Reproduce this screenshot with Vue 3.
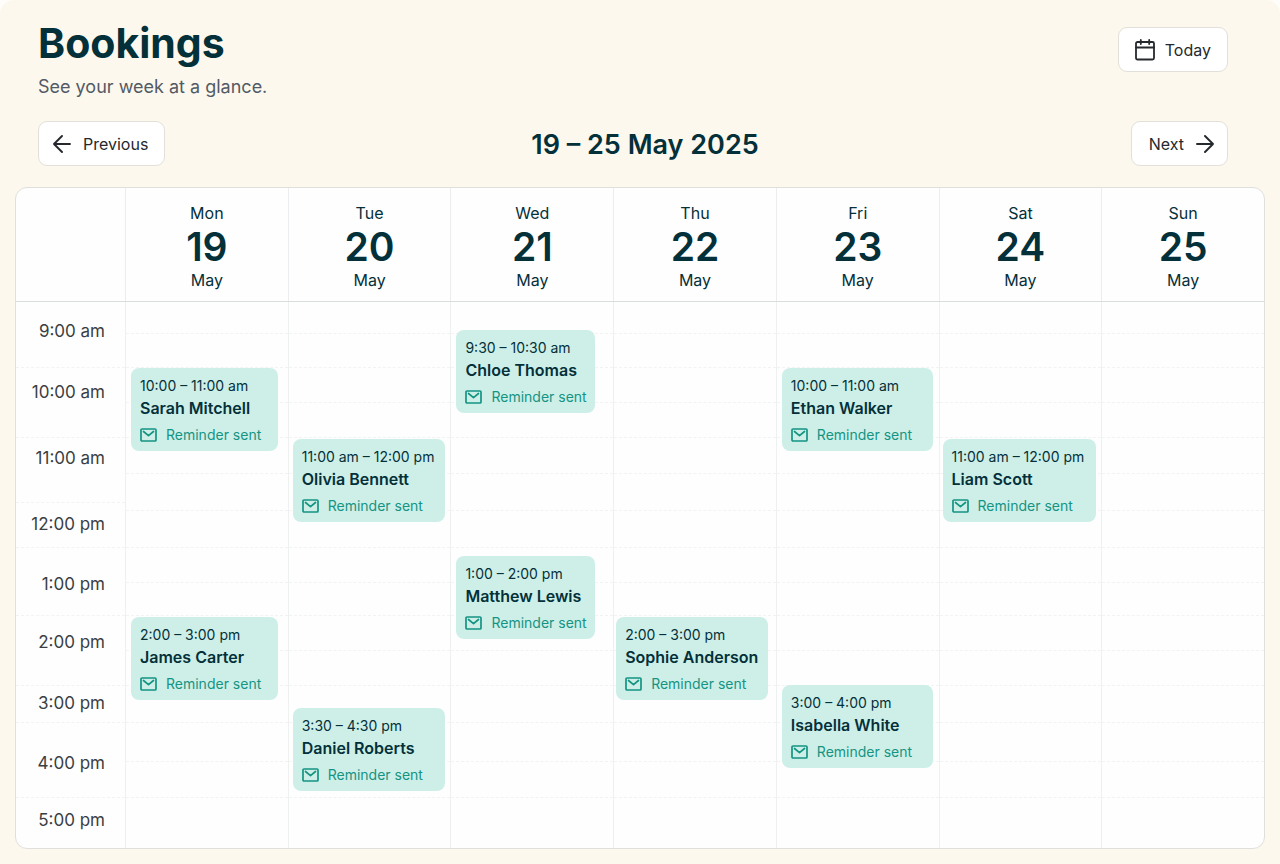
<template>
  <main class="page">
    <header class="page-header">
      <div class="title-row">
        <div>
          <h1 class="title">Bookings</h1>
          <p class="subtitle">See your week at a glance.</p>
        </div>
        <button type="button" class="btn btn-today">
          <svg class="icon-calendar" viewBox="0 0 20 22" aria-hidden="true">
            <rect x="1" y="3" width="18" height="17.5" rx="1.5" />
            <path d="M1 8.5h18M5.8 1v4M14.2 1v4" />
          </svg>
          Today
        </button>
      </div>

      <div class="week-nav">
        <button type="button" class="btn btn-previous">
          <svg class="icon-arrow" viewBox="0 0 18 18" aria-hidden="true">
            <path d="M17 9H1M9 1L1 9l8 8" />
          </svg>
          Previous
        </button>
        <h2 class="week-range">19 – 25 May 2025</h2>
        <button type="button" class="btn btn-next">
          Next
          <svg class="icon-arrow" viewBox="0 0 18 18" aria-hidden="true">
            <path d="M1 9h16M9 1l8 8-8 8" />
          </svg>
        </button>
      </div>
    </header>

    <section class="calendar" aria-label="Week calendar">
      <div class="calendar-row calendar-head">
        <div class="corner"></div>
        <div v-for="day in days" :key="day.date" class="day-head">
          <span class="day-text">{{ day.name }}</span>
          <span class="day-number">{{ day.date }}</span>
          <span class="day-text">May</span>
        </div>
      </div>

      <div class="calendar-row">
        <div class="time-column">
          <div class="time-lines">
            <div v-for="(h, i) in timeLines" :key="i" class="slot" :style="{ height: h + 'px' }"></div>
          </div>
          <div class="time-labels">
            <div v-for="t in times" :key="t.label" class="time-label" :style="{ height: t.height + 'px' }">
              {{ t.label }}
            </div>
          </div>
        </div>

        <div v-for="day in days" :key="day.date" class="day-column">
          <div v-for="(h, i) in slots" :key="i" class="slot" :style="{ height: h + 'px' }"></div>
          <!-- bookings lie over the slots -->
          <article
            v-for="b in day.bookings"
            :key="b.client"
            class="booking"
            :style="{ top: b.top + 'px', left: day.left + 'px', right: day.right + 'px' }"
          >
            <p class="booking-time">{{ b.time }}</p>
            <h3 class="booking-client">{{ b.client }}</h3>
            <p class="booking-reminder">
              <svg class="icon-mail" viewBox="0 0 17 14" aria-hidden="true">
                <rect x="1" y="1" width="15" height="12" rx="1" />
                <path d="M3.5 3.5l5 4.2 5-4.2" />
              </svg>
              Reminder sent
            </p>
          </article>
        </div>
      </div>
    </section>
  </main>
</template>

<script setup>
import { ref } from 'vue'

const times = [
  { label: '9:00 am', height: 58 },
  { label: '10:00 am', height: 64 },
  { label: '11:00 am', height: 68 },
  { label: '12:00 pm', height: 64 },
  { label: '1:00 pm', height: 56 },
  { label: '2:00 pm', height: 60 },
  { label: '3:00 pm', height: 62 },
  { label: '4:00 pm', height: 58 },
  { label: '5:00 pm', height: 56 }
]

// heights of the ruled slots
const slots = [32, 34, 35, 35, 36, 37, 37, 35, 33, 35, 35, 37, 39, 36]
const timeLines = [66, 70, 65, 45, 68, 70, 37, 75]

// left / right: gap between the booking and the column edges
const days = ref([
  {
    name: 'Mon', date: 19, left: 5, right: 10,
    bookings: [
      { time: '10:00 – 11:00 am', client: 'Sarah Mitchell', top: 66 },
      { time: '2:00 – 3:00 pm', client: 'James Carter', top: 315 }
    ]
  },
  {
    name: 'Tue', date: 20, left: 4, right: 5,
    bookings: [
      { time: '11:00 am – 12:00 pm', client: 'Olivia Bennett', top: 137 },
      { time: '3:30 – 4:30 pm', client: 'Daniel Roberts', top: 406 }
    ]
  },
  {
    name: 'Wed', date: 21, left: 5, right: 18,
    bookings: [
      { time: '9:30 – 10:30 am', client: 'Chloe Thomas', top: 28 },
      { time: '1:00 – 2:00 pm', client: 'Matthew Lewis', top: 254 }
    ]
  },
  {
    name: 'Thu', date: 22, left: 2, right: 8,
    bookings: [
      { time: '2:00 – 3:00 pm', client: 'Sophie Anderson', top: 315 }
    ]
  },
  {
    name: 'Fri', date: 23, left: 5, right: 6,
    bookings: [
      { time: '10:00 – 11:00 am', client: 'Ethan Walker', top: 66 },
      { time: '3:00 – 4:00 pm', client: 'Isabella White', top: 383 }
    ]
  },
  {
    name: 'Sat', date: 24, left: 3, right: 5,
    bookings: [
      { time: '11:00 am – 12:00 pm', client: 'Liam Scott', top: 137 }
    ]
  },
  { name: 'Sun', date: 25, left: 4, right: 6, bookings: [] }
])
</script>

<style>
body {
  background: #fefdfa;
}
</style>

<style scoped>
.page {
  box-sizing: border-box;
  min-height: 100vh;
  padding: 19px 15px 15px;
  border-radius: 14px 14px 0 0;
  background: #fdf8ed;
  color: #04303a;
  font-family: Inter, "Liberation Sans", sans-serif;
}

h1, h2, h3, p {
  margin: 0;
}

.page-header {
  padding: 0 37px 21px 23px;
}

.title-row {
  display: flex;
  justify-content: space-between;
  align-items: flex-start;
}

.title {
  font-size: 41px;
  line-height: 48px;
  font-weight: 700;
}

.subtitle {
  margin-top: 7px;
  font-size: 18px;
  line-height: 26px;
  color: #525a66;
}

.btn {
  display: flex;
  align-items: center;
  box-sizing: border-box;
  height: 45px;
  border: 1px solid #e2e0d9;
  border-radius: 9px;
  background: #fff;
  color: #25292d;
  font-family: inherit;
  font-size: 16px;
  line-height: 24px;
  cursor: pointer;
}

.btn-today {
  gap: 10px;
  margin-top: 8px;
  padding: 0 16px;
}

.btn-previous {
  gap: 12px;
  padding: 0 16px 0 14px;
}

.btn-next {
  gap: 12px;
  padding: 0 13px 0 17px;
}

.btn svg,
.icon-mail {
  flex: none;
  fill: none;
  stroke: currentColor;
  stroke-linecap: round;
  stroke-linejoin: round;
}

.icon-calendar {
  width: 20px;
  height: 22px;
  stroke-width: 1.8;
}

.icon-arrow {
  width: 18px;
  height: 18px;
  stroke-width: 1.9;
}

.week-nav {
  display: grid;
  grid-template-columns: 1fr auto 1fr;
  align-items: center;
  margin-top: 21px;
}

.btn-previous {
  justify-self: start;
}

.btn-next {
  justify-self: end;
}

.week-range {
  padding: 3px 0 0 24px;
  font-size: 27px;
  line-height: 36px;
  font-weight: 600;
}

.calendar {
  overflow: hidden;
  border: 1px solid #dfe0dc;
  border-radius: 12px;
  background: #fefefe;
}

.calendar-row {
  display: grid;
  grid-template-columns: 109px repeat(7, minmax(0, 1fr));
}

.calendar-head {
  border-bottom: 1px solid #dadddd;
}

.day-head {
  display: flex;
  flex-direction: column;
  align-items: center;
  padding: 13px 0 9px;
  border-left: 1px solid #ebedee;
}

.day-text {
  font-size: 16px;
  line-height: 24px;
}

.day-number {
  font-size: 39px;
  line-height: 43px;
  font-weight: 600;
}

.time-column {
  display: grid;
}

.time-lines,
.time-labels {
  grid-area: 1 / 1;
}

.time-label {
  display: flex;
  align-items: center;
  justify-content: flex-end;
  padding-right: 20px;
  font-size: 17px;
  color: #3a3e42;
}

.day-column {
  position: relative;
  border-left: 1px solid #eff1f1;
}

.slot {
  box-sizing: border-box;
  border-bottom: 1px dashed #f2f3f3;
}

.booking {
  position: absolute;
  box-sizing: border-box;
  height: 83px;
  padding: 9px 0 6px 9px;
  border-radius: 8px;
  background: #cdefe8;
  white-space: nowrap;
}

.booking-time {
  font-size: 14px;
  line-height: 18px;
}

.booking-client {
  font-size: 16px;
  line-height: 26px;
  font-weight: 600;
}

.booking-reminder {
  display: flex;
  align-items: center;
  gap: 9px;
  margin-top: 4px;
  font-size: 14px;
  line-height: 20px;
  color: #159483;
}

.icon-mail {
  width: 17px;
  height: 14px;
  stroke-width: 1.7;
}
</style>
